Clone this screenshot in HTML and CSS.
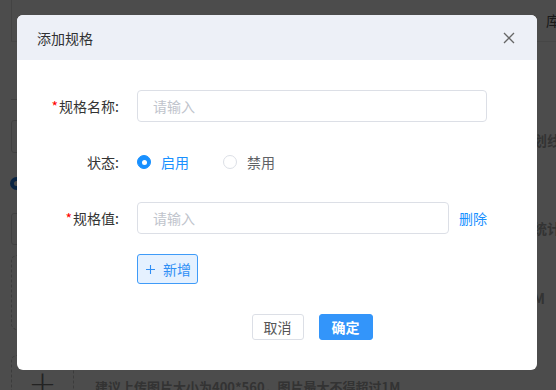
FILE: index.html
```html
<!DOCTYPE html>
<html lang="zh-CN">
<head>
<meta charset="utf-8">
<title>添加规格</title>
<link rel="stylesheet" href="styles.css">
</head>
<body>
<div class="page">
  <div class="main">
    <div class="m-head"></div>
    <div class="m-row"></div>
    <div class="m-input m-input-1"></div>
    <div class="m-radio"></div>
    <div class="m-input m-input-2"></div>
    <div class="m-upload"></div>
    <div class="m-upload-row">
      <div class="m-upload2"><span class="m-plus">+</span></div>
      <div class="m-tip">建议上传图片大小为400*560，图片最大不得超过1M</div>
    </div>
  </div>
  <div class="side">
    <div class="s-head">库存</div>
    <div class="s-t1">划线价</div>
    <div class="s-t2">统计</div>
    <div class="s-t3">M</div>
  </div>
</div>
<div class="mask"></div>
<div class="dialog-wrap">
  <div class="dialog">
    <div class="dlg-head">
      <span class="dlg-title">添加规格</span>
      <svg class="dlg-close" width="12" height="12" viewBox="0 0 12 12"><path d="M1 1L11 11M11 1L1 11" stroke="#666" stroke-width="1.3" fill="none"/></svg>
    </div>
    <div class="dlg-body">
      <div class="form-item item-name">
        <label class="form-label"><span class="req">*</span>规格名称:</label>
        <div class="form-content">
          <div class="input"><span class="ph">请输入</span></div>
        </div>
      </div>
      <div class="form-item item-status">
        <label class="form-label">状态:</label>
        <div class="form-content radios">
          <span class="radio on"><span class="radio-dot"></span><span class="radio-text">启用</span></span>
          <span class="radio"><span class="radio-dot"></span><span class="radio-text">禁用</span></span>
        </div>
      </div>
      <div class="form-item item-value">
        <label class="form-label"><span class="req">*</span>规格值:</label>
        <div class="form-content value-row">
          <div class="input grow"><span class="ph">请输入</span></div>
          <span class="link">删除</span>
        </div>
      </div>
      <div class="form-item item-add">
        <span class="form-label"></span>
        <div class="form-content">
          <span class="btn-add"><svg width="9" height="9" viewBox="0 0 9 9"><path d="M4.5 0V9M0 4.5H9" stroke="#2f8ff5" stroke-width="1.1" fill="none"/></svg><span>新增</span></span>
        </div>
      </div>
      <div class="form-item item-footer">
        <span class="form-label"></span>
        <div class="form-content footer">
          <span class="btn btn-default">取消</span>
          <span class="btn btn-primary">确定</span>
        </div>
      </div>
    </div>
  </div>
</div>
</body>
</html>
```

FILE: styles.css
```css
* { box-sizing: border-box; }
html, body { margin: 0; padding: 0; }
body {
  width: 556px;
  height: 390px;
  overflow: hidden;
  background: #fff;
  font-family: "Noto Sans CJK SC", "Noto Sans", sans-serif;
  font-size: 14px;
  color: #333;
}

/* background page */
.page {
  display: flex;
  height: 390px;
  padding-left: 11px;
  overflow: hidden;
}
.main { width: 522px; flex: none; }
.m-head { height: 42px; border-left: 1px solid #e2e2e2; border-bottom: 1px solid #ececec; }
.m-row { height: 58px; border-bottom: 1px solid #d6d6d6; }
.m-input { border: 1px solid #d8d8d8; border-radius: 3px; width: 300px; }
.m-input-1 { margin-top: 20px; height: 33px; }
.m-radio { margin-top: 24px; width: 13px; height: 13px; border-radius: 50%; border: 4px solid #1f7ae0; margin-left: -1px; }
.m-input-2 { margin-top: 23px; height: 32px; }
.m-upload { margin-top: 10px; height: 75px; width: 300px; border: 1px dashed #c8c8c8; border-radius: 6px; }
.m-upload-row { margin-top: 25px; display: flex; gap: 21px; }
.m-upload2 { width: 63px; height: 60px; border: 1px dashed #c8c8c8; border-radius: 6px; display: flex; justify-content: center; }
.m-plus { font-size: 34px; line-height: 1; margin-top: 10px; color: #777; font-family: "DejaVu Sans", sans-serif; font-weight: 200; }
.m-tip { margin-top: 22px; font-size: 13px; font-weight: 700; color: #aaa; white-space: nowrap; }
.side { flex: none; width: 40px; white-space: nowrap; font-weight: 700; color: #aaa; }
.s-head { height: 42px; padding-top: 10px; padding-left: 13px; font-weight: 400; color: #555; border-bottom: 1px solid #ececec; }
.s-t1 { margin-top: 88px; }
.s-t2 { margin-top: 68px; }
.s-t3 { margin-top: 50px; }

.mask { position: fixed; inset: 0; background: rgba(0, 0, 0, 0.7); }

/* dialog */
.dialog-wrap {
  position: fixed;
  inset: 0;
  display: flex;
  justify-content: center;
  align-items: flex-start;
  padding: 15px 2px 0 0;
}
.dialog {
  width: 520px;
  background: #fff;
  border-radius: 6px;
  overflow: hidden;
}
.dlg-head {
  height: 45px;
  background: #edf0f7;
  display: flex;
  align-items: center;
  justify-content: space-between;
  padding: 0 22px 0 20px;
}
.dlg-title { font-size: 14px; color: #303133; }
.dlg-close { display: block; }

.dlg-body { padding: 30px 50px 30px 20px; }
.form-item { display: flex; align-items: center; }
.form-label {
  width: 100px;
  flex: none;
  text-align: right;
  padding-right: 18px;
  font-size: 14px;
  color: #333;
}
.req { color: #f00; margin-right: 1px; }
.form-content { flex: 1; min-width: 0; }
.item-name, .item-status, .item-value { height: 32px; }
.item-status { margin-top: 24px; }
.item-value { margin-top: 24px; }
.item-add { margin-top: 20px; }
.item-footer { margin-top: 30px; }

.input {
  height: 32px;
  border: 1px solid #dcdfe6;
  border-radius: 4px;
  padding: 0 15px;
  display: flex;
  align-items: center;
}
.ph { color: #c0c4cc; font-size: 14px; }
.value-row { display: flex; align-items: center; gap: 10px; }
.grow { flex: 1; }
.link { color: #1890ff; font-size: 14px; }

.radios { display: flex; align-items: center; gap: 34px; }
.radio { display: inline-flex; align-items: center; gap: 10px; color: #606266; }
.radio-dot {
  width: 14px;
  height: 14px;
  border-radius: 50%;
  border: 1px solid #dcdfe6;
  background: #fff;
  position: relative;
}
.radio.on { color: #1890ff; }
.radio.on .radio-dot { background: #1890ff; border-color: #1890ff; }
.radio.on .radio-dot::after {
  content: "";
  position: absolute;
  left: 50%;
  top: 50%;
  width: 5px;
  height: 5px;
  margin: -2.5px 0 0 -2.5px;
  border-radius: 50%;
  background: #fff;
}

.btn-add {
  display: inline-flex;
  align-items: center;
  gap: 8px;
  height: 30px;
  padding: 0 6px 0 8px;
  border: 1px solid #3f9bf8;
  border-radius: 3px;
  background: #e5f1ff;
  color: #2f8ff5;
  font-size: 14px;
}
.btn-add svg { display: block; }

.footer { display: flex; justify-content: center; gap: 15px; }
.btn {
  display: inline-flex;
  align-items: center;
  height: 26px;
  padding: 0 11px;
  border-radius: 3px;
  font-size: 14px;
  border: 1px solid #dcdfe6;
}
.btn-default { background: #fff; color: #555; }
.btn-primary { background: #3395fa; border-color: #3395fa; color: #fff; font-weight: 700; padding: 0 12px; }
```
